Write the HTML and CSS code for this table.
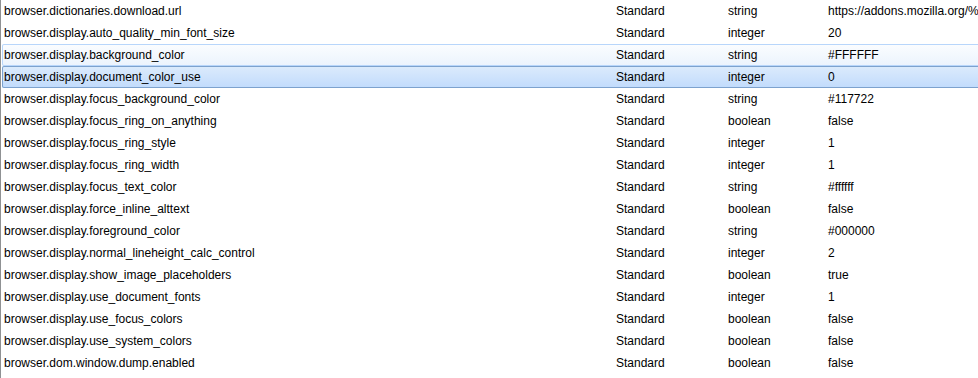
FILE: index.html
```html
<!DOCTYPE html>
<html>
<head>
<meta charset="utf-8">
<link rel="stylesheet" href="styles.css">
</head>
<body>
<div class="tree">
  <div class="row"><span class="c name">browser.dictionaries.download.url</span><span class="c status">Standard</span><span class="c type">string</span><span class="c value">https://addons.mozilla.org/%LOCALE%/firefox/dictionaries/</span></div>
  <div class="row"><span class="c name">browser.display.auto_quality_min_font_size</span><span class="c status">Standard</span><span class="c type">integer</span><span class="c value">20</span></div>
  <div class="row hover"><span class="c name">browser.display.background_color</span><span class="c status">Standard</span><span class="c type">string</span><span class="c value">#FFFFFF</span></div>
  <div class="row selected"><span class="c name">browser.display.document_color_use</span><span class="c status">Standard</span><span class="c type">integer</span><span class="c value">0</span></div>
  <div class="row"><span class="c name">browser.display.focus_background_color</span><span class="c status">Standard</span><span class="c type">string</span><span class="c value">#117722</span></div>
  <div class="row"><span class="c name">browser.display.focus_ring_on_anything</span><span class="c status">Standard</span><span class="c type">boolean</span><span class="c value">false</span></div>
  <div class="row"><span class="c name">browser.display.focus_ring_style</span><span class="c status">Standard</span><span class="c type">integer</span><span class="c value">1</span></div>
  <div class="row"><span class="c name">browser.display.focus_ring_width</span><span class="c status">Standard</span><span class="c type">integer</span><span class="c value">1</span></div>
  <div class="row"><span class="c name">browser.display.focus_text_color</span><span class="c status">Standard</span><span class="c type">string</span><span class="c value">#ffffff</span></div>
  <div class="row"><span class="c name">browser.display.force_inline_alttext</span><span class="c status">Standard</span><span class="c type">boolean</span><span class="c value">false</span></div>
  <div class="row"><span class="c name">browser.display.foreground_color</span><span class="c status">Standard</span><span class="c type">string</span><span class="c value">#000000</span></div>
  <div class="row"><span class="c name">browser.display.normal_lineheight_calc_control</span><span class="c status">Standard</span><span class="c type">integer</span><span class="c value">2</span></div>
  <div class="row"><span class="c name">browser.display.show_image_placeholders</span><span class="c status">Standard</span><span class="c type">boolean</span><span class="c value">true</span></div>
  <div class="row"><span class="c name">browser.display.use_document_fonts</span><span class="c status">Standard</span><span class="c type">integer</span><span class="c value">1</span></div>
  <div class="row"><span class="c name">browser.display.use_focus_colors</span><span class="c status">Standard</span><span class="c type">boolean</span><span class="c value">false</span></div>
  <div class="row"><span class="c name">browser.display.use_system_colors</span><span class="c status">Standard</span><span class="c type">boolean</span><span class="c value">false</span></div>
  <div class="row"><span class="c name">browser.dom.window.dump.enabled</span><span class="c status">Standard</span><span class="c type">boolean</span><span class="c value">false</span></div>
</div>
</body>
</html>
```

FILE: styles.css
```css
html, body {
  margin: 0;
  padding: 0;
  background: #ffffff;
  overflow: hidden;
}

.tree {
  width: 978px;
  height: 378px;
  border-left: 1px solid #8f9193;
  box-sizing: border-box;
  padding-left: 1px;
  font-family: "Liberation Sans", Arial, sans-serif;
  font-size: 12px;
  color: #000000;
  overflow: hidden;
}

.row {
  display: flex;
  height: 22px;
  white-space: nowrap;
  width: 1000px;
}

.row.hover {
  border-radius: 2px;
  box-shadow: inset 0 0 0 1px #b8d6fb;
  background: linear-gradient(to bottom, #fbfdff, #ebf3fd);
}

.row.selected {
  border-radius: 2px;
  box-shadow: inset 0 0 0 1px #7da2ce;
  background: linear-gradient(to bottom, #dcebfc, #c1dbfc);
}

.c {
  display: block;
  overflow: hidden;
  flex: none;
  box-sizing: border-box;
  padding-top: 1px;
  line-height: 21px;
}

.name {
  width: 611px;
  padding-left: 2px;
}

.status {
  width: 112px;
  padding-left: 3px;
}

.type {
  width: 100px;
  padding-left: 3px;
}

.value {
  flex: 1;
  padding-left: 3px;
}
```
